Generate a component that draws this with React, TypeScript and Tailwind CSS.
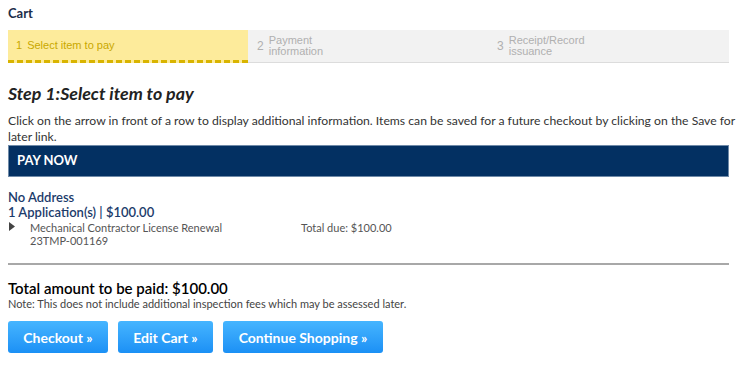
export default function App() {
  return (
    <div className="w-[744px] h-[374px] bg-white font-['Lato',sans-serif] text-[#333] px-2 pt-[4px]">
      <h1 className="text-[13px] font-bold text-[#1c2e4a] leading-[18px]">Cart</h1>

      <div className="mt-[8px] flex w-[721px] h-[33px] bg-[#f2f2f2] border-b border-[#dcdcdc] font-['Liberation_Sans',sans-serif] text-[11px] leading-[11px]">
        <div className="w-[240px] h-[33px] bg-[#fdeb9b] border-b-[3px] border-dashed border-[#d9b400] flex items-center pl-[8px] text-[#c9a800]">
          <span className="mr-[5px]">1</span>
          <span>Select item to pay</span>
        </div>
        <div className="w-[240px] flex items-center pl-[9px] text-[#b0b0b0]">
          <span className="mr-[5px] text-[12px]">2</span>
          <span>Payment<br />information</span>
        </div>
        <div className="flex items-center pl-[9px] text-[#b0b0b0]">
          <span className="mr-[5px] text-[12px]">3</span>
          <span>Receipt/Record<br />issuance</span>
        </div>
      </div>

      <h2 className="mt-[19px] text-[17.8px] font-bold italic text-[#222] leading-[22px]">Step 1:Select item to pay</h2>

      <p className="mt-[9px] w-[732px] text-[12.2px] leading-[16px] text-[#333]">
        Click on the arrow in front of a row to display additional information. Items can be saved for a future checkout by clicking on the Save for later link.
      </p>

      <div className="w-[721px] h-[32px] bg-[#033062] border border-[#6f8aa8] flex items-center pl-[8px]">
        <span className="text-white font-bold text-[13px]">PAY NOW</span>
      </div>

      <div className="mt-[13px] text-[#1c3b6b] text-[13px] leading-[15px] font-semibold">
        <div>No Address</div>
        <div>1 Application(s) | $100.00</div>
      </div>

      <div className="flex text-[11px] leading-[13px] text-[#555] mt-[1px]">
        <svg width="6" height="9" viewBox="0 0 6 9" className="mt-[1px] ml-[1px]">
          <path d="M0 0 L6 4.5 L0 9 Z" fill="#444" />
        </svg>
        <div className="ml-[15px] w-[271px]">
          <div>Mechanical Contractor License Renewal</div>
          <div>23TMP-001169</div>
        </div>
        <div>Total due: $100.00</div>
      </div>

      <div className="mt-[16px] w-[721px] border-t-2 border-[#a8a8a8]" />

      <div className="mt-[14px] text-[15px] leading-[18px] font-semibold text-black">Total amount to be paid: $100.00</div>
      <div className="text-[11px] leading-[13px] text-[#444]">Note: This does not include additional inspection fees which may be assessed later.</div>

      <div className="mt-[11px] flex gap-[10px]">
        <button className="w-[100px] h-[32px] rounded-[3px] bg-gradient-to-b from-[#45b5ff] to-[#1b90f5] text-white font-bold text-[14px]">Checkout »</button>
        <button className="w-[95px] h-[32px] rounded-[3px] bg-gradient-to-b from-[#45b5ff] to-[#1b90f5] text-white font-bold text-[14px]">Edit Cart »</button>
        <button className="w-[160px] h-[32px] rounded-[3px] bg-gradient-to-b from-[#45b5ff] to-[#1b90f5] text-white font-bold text-[14px]">Continue Shopping »</button>
      </div>
    </div>
  );
}
